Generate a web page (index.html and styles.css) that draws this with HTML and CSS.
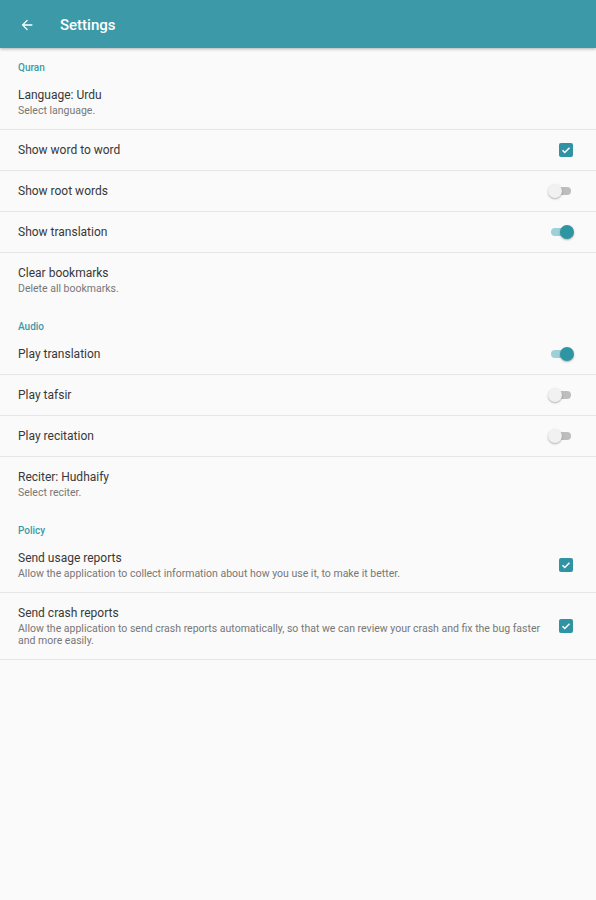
FILE: index.html
```html
<!DOCTYPE html>
<html>
<head>
<meta charset="utf-8">
<link rel="stylesheet" href="styles.css">
</head>
<body>
<header class="appbar">
  <svg class="back" viewBox="0 0 24 24" width="16" height="16"><path d="M20 11H7.83l5.59-5.59L12 4l-8 8 8 8 1.41-1.41L7.83 13H20v-2z" fill="#fff"/></svg>
  <span class="title">Settings</span>
</header>
<main class="prefs">
  <div class="cat">Quran</div>
  <div class="row two"><div class="text"><div class="t">Language: Urdu</div><div class="s">Select language.</div></div></div>
  <div class="row"><div class="text"><div class="t">Show word to word</div></div><div class="w"><span class="cb"><svg viewBox="0 0 24 24" width="12" height="12"><path d="M5 12.5l4.5 4.5L19 7.5" stroke="#fff" stroke-width="3" fill="none"/></svg></span></div></div>
  <div class="row"><div class="text"><div class="t">Show root words</div></div><div class="w"><span class="sw"><span class="track"></span><span class="thumb"></span></span></div></div>
  <div class="row"><div class="text"><div class="t">Show translation</div></div><div class="w"><span class="sw on"><span class="track"></span><span class="thumb"></span></span></div></div>
  <div class="row two last"><div class="text"><div class="t">Clear bookmarks</div><div class="s">Delete all bookmarks.</div></div></div>
  <div class="cat">Audio</div>
  <div class="row"><div class="text"><div class="t">Play translation</div></div><div class="w"><span class="sw on"><span class="track"></span><span class="thumb"></span></span></div></div>
  <div class="row"><div class="text"><div class="t">Play tafsir</div></div><div class="w"><span class="sw"><span class="track"></span><span class="thumb"></span></span></div></div>
  <div class="row"><div class="text"><div class="t">Play recitation</div></div><div class="w"><span class="sw"><span class="track"></span><span class="thumb"></span></span></div></div>
  <div class="row two last"><div class="text"><div class="t">Reciter: Hudhaify</div><div class="s">Select reciter.</div></div></div>
  <div class="cat">Policy</div>
  <div class="row two"><div class="text"><div class="t">Send usage reports</div><div class="s">Allow the application to collect information about how you use it, to make it better.</div></div><div class="w"><span class="cb"><svg viewBox="0 0 24 24" width="12" height="12"><path d="M5 12.5l4.5 4.5L19 7.5" stroke="#fff" stroke-width="3" fill="none"/></svg></span></div></div>
  <div class="row two"><div class="text"><div class="t">Send crash reports</div><div class="s">Allow the application to send crash reports automatically, so that we can review your crash and fix the bug faster and more easily.</div></div><div class="w"><span class="cb"><svg viewBox="0 0 24 24" width="12" height="12"><path d="M5 12.5l4.5 4.5L19 7.5" stroke="#fff" stroke-width="3" fill="none"/></svg></span></div></div>
</main>
</body>
</html>
```
FILE: styles.css
```css
html, body {
  margin: 0;
  padding: 0;
  background: #fafafa;
  font-family: Roboto, "Liberation Sans", sans-serif;
  height: 100%;
}
.appbar {
  height: 48px;
  box-sizing: border-box;
  padding-top: 2px;
  background: #3c9aa8;
  display: flex;
  align-items: center;
  box-shadow: 0 1px 3px rgba(0,0,0,0.3);
  position: relative;
  z-index: 1;
}
.back {
  margin-left: 19px;
  margin-right: 25px;
}
.title {
  color: #fff;
  font-size: 15px;
  font-weight: 500;
}
.prefs {
  display: flex;
  flex-direction: column;
}
.cat {
  padding: 13px 18px 0;
  line-height: 14px;
  font-size: 10px;
  font-weight: 500;
  color: #3c9aa8;
}
.row {
  display: flex;
  align-items: center;
  padding: 12px 0 12px 18px;
  min-height: 16px;
  border-bottom: 1px solid #e6e6e6;
}
.row.last {
  border-bottom: none;
}
.text {
  flex: 1;
  min-width: 0;
}
.t {
  font-size: 12px;
  line-height: 16px;
  color: #383838;
}
.s {
  margin-top: 2px;
  font-size: 10.5px;
  line-height: 12px;
  color: #777;
}
.w {
  flex: none;
  width: 36px;
  margin-right: 12px;
  display: flex;
  justify-content: center;
}
.cb {
  width: 14px;
  height: 14px;
  border-radius: 2px;
  background: #2f93a3;
  display: flex;
  align-items: center;
  justify-content: center;
}
.sw {
  position: relative;
  width: 28px;
  height: 16px;
  display: block;
  margin-right: 10px;
}
.track {
  position: absolute;
  left: 3px;
  right: 3px;
  top: 4px;
  height: 8px;
  border-radius: 4px;
  background: #bdbdbd;
}
.thumb {
  position: absolute;
  left: 0;
  top: 1px;
  width: 14px;
  height: 14px;
  border-radius: 50%;
  background: #f1f1f1;
  box-shadow: 0 1px 2px rgba(0,0,0,0.3);
}
.sw.on .track {
  background: #9dd0d7;
}
.sw.on .thumb {
  left: auto;
  right: 0;
  background: #2e95a3;
}
```
